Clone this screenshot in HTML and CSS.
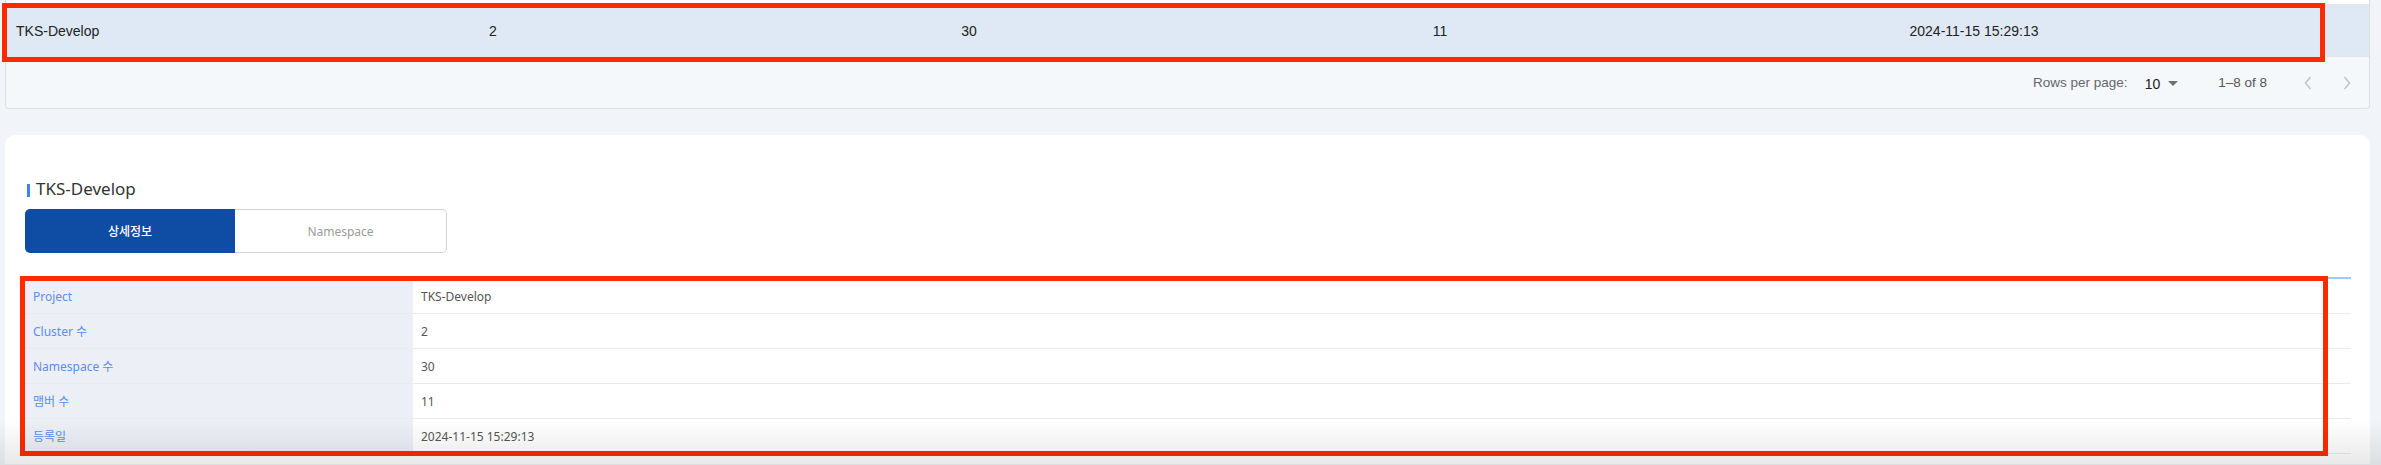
FILE: index.html
```html
<!DOCTYPE html>
<html lang="ko">
<head>
<meta charset="utf-8">
<title>Project</title>
<link rel="stylesheet" href="styles.css">
</head>
<body>
<div class="page">
  <section class="list-card">
    <div class="prev-row"></div>
    <div class="list-row selected">
      <div class="cell first">TKS-Develop</div>
      <div class="cell">2</div>
      <div class="cell">30</div>
      <div class="cell">11</div>
      <div class="cell">2024-11-15 15:29:13</div>
      <div class="cell"></div>
    </div>
    <div class="pagination">
      <span class="rows-label">Rows per page:</span>
      <span class="rows-select">10<span class="caret"></span></span>
      <span class="range">1–8 of 8</span>
      <span class="pg-btn"><svg width="24" height="24" viewBox="0 0 24 24"><polyline points="14.5,6 9.5,12 14.5,18" fill="none" stroke="#c4c4c4" stroke-width="1.6"/></svg></span>
      <span class="pg-btn"><svg width="24" height="24" viewBox="0 0 24 24"><polyline points="9.5,6 14.5,12 9.5,18" fill="none" stroke="#c4c4c4" stroke-width="1.6"/></svg></span>
    </div>
  </section>

  <section class="detail-card">
    <h2 class="detail-title">TKS-Develop</h2>
    <div class="tabs">
      <div class="tab active">상세정보</div>
      <div class="tab">Namespace</div>
    </div>
    <div class="info-table">
      <div class="info-row"><div class="info-label">Project</div><div class="info-value">TKS-Develop</div></div>
      <div class="info-row"><div class="info-label">Cluster 수</div><div class="info-value">2</div></div>
      <div class="info-row"><div class="info-label">Namespace 수</div><div class="info-value">30</div></div>
      <div class="info-row"><div class="info-label">맴버 수</div><div class="info-value">11</div></div>
      <div class="info-row"><div class="info-label">등록일</div><div class="info-value">2024-11-15 15:29:13</div></div>
    </div>
  </section>
</div>
<div class="annot annot-top"></div>
<div class="annot annot-detail"></div>
<div class="bottom-fade"></div>
</body>
</html>
```
FILE: styles.css
```css
html, body {
  margin: 0;
  padding: 0;
  overflow: hidden;
  height: 465px;
}
body {
  position: relative;
  background: #f1f4f8;
  font-family: "Liberation Sans", Arial, sans-serif;
  color: #222;
}
.page {
  padding: 0 11px 0 5px;
}

/* list card */
.list-card {
  background: #f5f8fb;
  border: 1px solid #dcdfe3;
  border-top: none;
  border-radius: 0 0 4px 4px;
}
.prev-row {
  height: 4px;
  background: #ffffff;
  border-bottom: 1px solid #e2e5e9;
}
.list-row {
  display: grid;
  grid-template-columns: 249px 476px 476px 466px 602px 1fr;
  height: 51px;
  align-items: center;
  border-bottom: 1px solid #e2e5e9;
  font-size: 14px;
}
.list-row.selected {
  background: #dfe9f5;
}
.cell {
  text-align: center;
  white-space: nowrap;
}
.cell.first {
  text-align: left;
  padding-left: 10px;
}
.pagination {
  height: 51px;
  display: flex;
  align-items: center;
  justify-content: flex-end;
  padding-right: 10px;
  font-size: 13.5px;
  color: #666;
}
.rows-label {
  margin-right: 17px;
}
.rows-select {
  display: flex;
  align-items: center;
  color: #222;
  font-size: 14px;
  margin-right: 40px;
  margin-top: 2px;
}
.caret {
  width: 0;
  height: 0;
  border-left: 5px solid transparent;
  border-right: 5px solid transparent;
  border-top: 5px solid #707070;
  margin-left: 8px;
}
.range {
  color: #555;
  margin-right: 29px;
}
.pg-btn {
  width: 24px;
  height: 24px;
  display: flex;
}
.pg-btn + .pg-btn {
  margin-left: 15px;
}

/* detail card */
.detail-card {
  margin-top: 26px;
  background: #ffffff;
  border-radius: 10px 10px 0 0;
  padding: 42px 19px 0 20px;
  height: 287px;
  font-family: "Noto Sans", "Noto Sans CJK KR", sans-serif;
}
.detail-title {
  margin: 0;
  display: flex;
  align-items: center;
  font-size: 17px;
  line-height: 24px;
  font-weight: 400;
  color: #333;
}
.detail-title::before {
  content: "";
  width: 3px;
  height: 13px;
  background: #3b84ee;
  margin: 2px 6px 0 2px;
}
.tabs {
  display: flex;
  margin-top: 8px;
  height: 44px;
}
.tab {
  display: flex;
  align-items: center;
  justify-content: center;
  font-size: 12px;
  color: #9a9a9a;
  border: 1px solid #cfd2d6;
  border-left: none;
  border-radius: 0 5px 5px 0;
  box-sizing: border-box;
  width: 212px;
}
.tab.active {
  width: 210px;
  background: #0f4ca3;
  color: #ffffff;
  border: none;
  border-radius: 5px 0 0 5px;
  font-weight: 500;
}
.info-table {
  margin-top: 24px;
  border-top: 2px solid #a4c7f3;
}
.info-row {
  display: grid;
  grid-template-columns: 388px 1fr;
  height: 34px;
  border-bottom: 1px solid #ebebeb;
  font-size: 12px;
}
.info-label {
  background: #eceff6;
  color: #5b8def;
  padding-left: 8px;
  display: flex;
  align-items: center;
}
.info-value {
  color: #555;
  padding-left: 8px;
  display: flex;
  align-items: center;
}

/* annotation overlays */
.annot {
  position: absolute;
  border: 5px solid #ff2a00;
  box-sizing: border-box;
}
.annot-top {
  left: 2px;
  top: 3px;
  width: 2323px;
  height: 59px;
}
.annot-detail {
  left: 20px;
  top: 276px;
  width: 2308px;
  height: 180px;
}
.bottom-fade {
  position: absolute;
  left: 0;
  right: 0;
  bottom: 0;
  height: 45px;
  background: linear-gradient(to bottom, rgba(0,0,0,0), rgba(0,0,0,0.09));
  pointer-events: none;
}
```
